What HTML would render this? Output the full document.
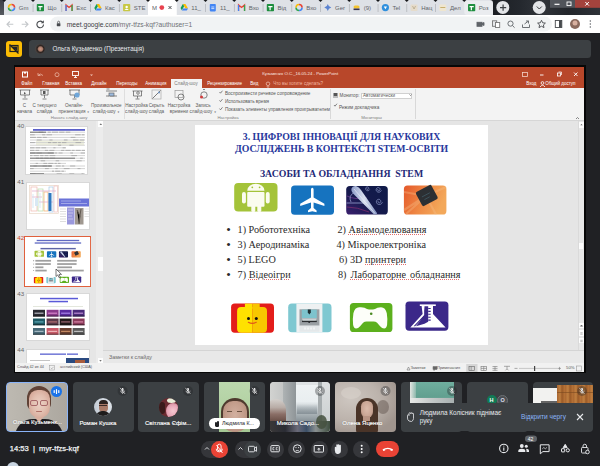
<!DOCTYPE html>
<html><head><meta charset="utf-8">
<style>
*{margin:0;padding:0;box-sizing:border-box}
html,body{width:600px;height:466px;overflow:hidden;background:#202124;font-family:"Liberation Sans",sans-serif}
.a{position:absolute}
.t{position:absolute;white-space:nowrap;line-height:1}
/* chrome */
#tabstrip{left:0;top:0;width:600px;height:15px;background:#dee1e6}
.tab{position:absolute;top:0;width:29px;height:15px}
.tab .fav{position:absolute;left:5px;top:4px;width:7px;height:7px}
.tab .tt{position:absolute;left:16px;top:4px;font-size:6.5px;color:#5f6368;line-height:1}
.tab .sep{position:absolute;left:0;top:4px;width:1px;height:8px;background:#a9acb1}
.notch{position:absolute;top:0;width:4px;height:2px;background:#111;border-radius:0 0 2px 2px}
#toolbar{left:0;top:15px;width:600px;height:18px;background:#fff}
/* meet */
#mhead{left:0;top:33px;width:600px;height:31px;background:#202124}
/* ppt */
#ppt{left:14px;top:65px;width:571.8px;height:308.2px;background:#070707}
#pin{left:1.3px;top:1.7px;width:568.8px;height:305.1px;background:#e6e6e6;overflow:hidden}
.li{font-family:'Liberation Serif',serif;font-size:10.2px;color:#2a2a2a}
.sp{text-decoration:underline dotted #e07070;text-decoration-thickness:0.8px;text-underline-offset:1.2px}
</style></head><body>

<!-- ============ CHROME TAB STRIP ============ -->
<div id="tabstrip" class="a">
  <div class="a" style="left:0;top:0;width:4px;height:15px;background:linear-gradient(180deg,#3d4046,#55595f)"></div>
  <div class="a" style="left:493px;top:0;width:107px;height:15px;background:linear-gradient(90deg,#1c1f24,#24282e 25%,#30343a 45%,#23262b 70%,#2e3238)"></div>
<svg class="a" style="left:0;top:0" width="600" height="15">
<g transform="translate(11.55 7.5)" fill="none" stroke-width="1.6"><path d="M3 0 A3 3 0 0 1 0 3" stroke="#4285f4"/><path d="M0 3 A3 3 0 0 1 -3 0" stroke="#34a853"/><path d="M-3 0 A3 3 0 0 1 0 -3" stroke="#fbbc05"/><path d="M0 -3 A3 3 0 0 1 3 0" stroke="#ea4335"/></g><path d="M2.25 0 h4 l-2 2z" fill="#16181b"/>
<rect x="36.8" y="4" width="7.2" height="7.2" rx="0.8" fill="#1e8e3e"/><path d="M38.3 6.6 h4.2 M40.099999999999994 6.6 v3.6" stroke="#fff" stroke-width="1.2"/><rect x="32.7" y="4" width="0.7" height="8" fill="#aeb1b6"/><path d="M31.0 0 h4 l-2 2z" fill="#16181b"/>
<path d="M66.05 11 v-6 l3 2.5 l3 -2.5 v6" fill="none" stroke="#ea4335" stroke-width="1.3"/><path d="M66.05 11 v-6" stroke="#4285f4" stroke-width="1.3"/><path d="M72.05 11 v-6" stroke="#34a853" stroke-width="1.3"/><rect x="61.45" y="4" width="0.7" height="8" fill="#aeb1b6"/><path d="M59.75 0 h4 l-2 2z" fill="#16181b"/>
<path d="M96.6 4 h2.6 l2.6 4.6 h-2.6z" fill="#fbbc04"/><path d="M96.6 4 l1.3 2.3 l-2.3 4 l-1.3 -2.3z" fill="#0f9d58"/><path d="M95.6 10.6 l1.3 -2.2 h4.9 l-1.3 2.2z" fill="#4285f4"/><rect x="90.2" y="4" width="0.7" height="8" fill="#aeb1b6"/><path d="M88.5 0 h4 l-2 2z" fill="#16181b"/>
<rect x="123.05" y="4" width="7.2" height="7.2" rx="0.8" fill="#c8c845"/><circle cx="126.64999999999999" cy="7" r="1.2" fill="#fff"/><path d="M124.55 10 q2.1 -2.5 4.2 0" fill="#fff"/><rect x="118.95" y="4" width="0.7" height="8" fill="#aeb1b6"/><path d="M117.25 0 h4 l-2 2z" fill="#16181b"/>
<rect x="148.0" y="0" width="28.75" height="15" fill="#fff"/><path d="M145.0 0 q3 0 3 3 v-3z M179.75 0 q-3 0 -3 3 v-3z" fill="#fff"/><path d="M146.0 0 h4 l-2 2z" fill="#16181b"/>
<circle cx="161.8" cy="7.6" r="2.4" fill="#e8424f"/><path d="M168.5 6 l3 3 M171.5 6 l-3 3" stroke="#3c4043" stroke-width="0.9"/><path d="M182.85000000000002 4 h2.6 l2.6 4.6 h-2.6z" fill="#fbbc04"/><path d="M182.85000000000002 4 l1.3 2.3 l-2.3 4 l-1.3 -2.3z" fill="#0f9d58"/><path d="M181.85000000000002 10.6 l1.3 -2.2 h4.9 l-1.3 2.2z" fill="#4285f4"/><path d="M174.75 0 h4 l-2 2z" fill="#16181b"/>
<rect x="209.8" y="4" width="6" height="7.4" rx="0.8" fill="#4285f4"/><path d="M211.3 7 h3 M211.3 8.6 h3" stroke="#fff" stroke-width="0.7"/><rect x="205.2" y="4" width="0.7" height="8" fill="#aeb1b6"/><path d="M203.5 0 h4 l-2 2z" fill="#16181b"/>
<path d="M238.55 11 v-6 l3 2.5 l3 -2.5 v6" fill="none" stroke="#ea4335" stroke-width="1.3"/><path d="M238.55 11 v-6" stroke="#4285f4" stroke-width="1.3"/><path d="M244.55 11 v-6" stroke="#34a853" stroke-width="1.3"/><rect x="233.95" y="4" width="0.7" height="8" fill="#aeb1b6"/><path d="M232.25 0 h4 l-2 2z" fill="#16181b"/>
<rect x="266.8" y="4" width="7.2" height="7.2" rx="0.8" fill="#1e8e3e"/><path d="M268.3 6.6 h4.2 M270.1 6.6 v3.6" stroke="#fff" stroke-width="1.2"/><rect x="262.7" y="4" width="0.7" height="8" fill="#aeb1b6"/><path d="M261.0 0 h4 l-2 2z" fill="#16181b"/>
<g transform="translate(299.05 7.5)" fill="none" stroke-width="1.6"><path d="M3 0 A3 3 0 0 1 0 3" stroke="#4285f4"/><path d="M0 3 A3 3 0 0 1 -3 0" stroke="#34a853"/><path d="M-3 0 A3 3 0 0 1 0 -3" stroke="#fbbc05"/><path d="M0 -3 A3 3 0 0 1 3 0" stroke="#ea4335"/></g><rect x="291.45" y="4" width="0.7" height="8" fill="#aeb1b6"/><path d="M289.75 0 h4 l-2 2z" fill="#16181b"/>
<path d="M327.8 4 q0.6 2.9 3.5 3.5 q-2.9 0.6 -3.5 3.5 q-0.6 -2.9 -3.5 -3.5 q2.9 -0.6 3.5 -3.5z" fill="#5b83d0"/><rect x="320.2" y="4" width="0.7" height="8" fill="#aeb1b6"/><path d="M318.5 0 h4 l-2 2z" fill="#16181b"/>
<rect x="353.55" y="5.5" width="6" height="3" rx="1.5" fill="#f4c430"/><rect x="353.55" y="8.5" width="6" height="1.6" fill="#3a3550"/><rect x="348.95" y="4" width="0.7" height="8" fill="#aeb1b6"/><path d="M347.25 0 h4 l-2 2z" fill="#16181b"/>
<circle cx="385.40000000000003" cy="7.6" r="3.6" fill="#2f8fdd"/><path d="M383.8 6.5 h3.2 l-1.6 2.8z" fill="#fff"/><rect x="377.7" y="4" width="0.7" height="8" fill="#aeb1b6"/><path d="M376.0 0 h4 l-2 2z" fill="#16181b"/>
<rect x="410.55" y="4.5" width="7" height="6.5" rx="1" fill="#e6dccb"/><path d="M412.55 6 l1.5 3 l1.5 -3" stroke="#b8a888" stroke-width="0.8" fill="none"/><rect x="406.45" y="4" width="0.7" height="8" fill="#aeb1b6"/><path d="M404.75 0 h4 l-2 2z" fill="#16181b"/>
<rect x="439.3" y="4.5" width="7" height="6.5" rx="1" fill="#efe6cf"/><path d="M440.3 7.5 h5" stroke="#c8b070" stroke-width="1"/><rect x="435.2" y="4" width="0.7" height="8" fill="#aeb1b6"/><path d="M433.5 0 h4 l-2 2z" fill="#16181b"/>
<rect x="464.25" y="0.8" width="28.75" height="14.2" rx="3" fill="#eaecef"/><rect x="468.05" y="4" width="7.2" height="7.2" rx="0.8" fill="#1e8e3e"/><path d="M469.55 6.6 h4.2 M471.35 6.6 v3.6" stroke="#fff" stroke-width="1.2"/><path d="M462.25 0 h4 l-2 2z" fill="#16181b"/>
<path d="M493 0 h-3 q3 0 3 3z" fill="#16181b"/><circle cx="502.8" cy="7.4" r="6.5" fill="#e3e5e8"/><path d="M503.1 4.5 v6.2 M500 7.6 h6.2" stroke="#3c4043" stroke-width="1.2"/><circle cx="539.2" cy="7.5" r="6.5" fill="#e3e5e8"/><path d="M536.8 6.5 l2.5 2.5 l2.5 -2.5" fill="none" stroke="#3c4043" stroke-width="1"/><rect x="550" y="0" width="25" height="7.8" fill="#6e7278" opacity="0.6"/><rect x="575" y="0" width="25" height="7.8" fill="#b8463e" opacity="0.85"/><path d="M554.5 4.3 h5" stroke="#fff" stroke-width="1.2"/><rect x="567" y="2" width="4" height="3.6" fill="none" stroke="#fff" stroke-width="0.9"/><path d="M585.3 2 l3.6 3.6 M588.9 2 l-3.6 3.6" stroke="#fff" stroke-width="1"/></svg>
<div class="t" style="left:18.75px;top:4.6px;font-size:6px;color:#5f6368">Gm</div><div class="t" style="left:47.5px;top:4.6px;font-size:6px;color:#5f6368">Що</div><div class="t" style="left:76.25px;top:4.6px;font-size:6px;color:#5f6368">Exc</div><div class="t" style="left:105.0px;top:4.6px;font-size:6px;color:#5f6368">Кас</div><div class="t" style="left:133.75px;top:4.6px;font-size:6px;color:#5f6368">STE</div><div class="t" style="left:152.0px;top:4.6px;font-size:6px;color:#5f6368">M</div><div class="t" style="left:191.25px;top:4.6px;font-size:6px;color:#5f6368">11_</div><div class="t" style="left:220.0px;top:4.6px;font-size:6px;color:#5f6368">11_</div><div class="t" style="left:248.75px;top:4.6px;font-size:6px;color:#5f6368">Вхо</div><div class="t" style="left:277.5px;top:4.6px;font-size:6px;color:#5f6368">Від</div><div class="t" style="left:306.25px;top:4.6px;font-size:6px;color:#5f6368">Вхо</div><div class="t" style="left:335.0px;top:4.6px;font-size:6px;color:#5f6368">Ger</div><div class="t" style="left:363.75px;top:4.6px;font-size:6px;color:#5f6368">(9)</div><div class="t" style="left:392.5px;top:4.6px;font-size:6px;color:#5f6368">Tel</div><div class="t" style="left:421.25px;top:4.6px;font-size:6px;color:#5f6368">Нац</div><div class="t" style="left:450.0px;top:4.6px;font-size:6px;color:#5f6368">Дел</div><div class="t" style="left:478.75px;top:4.6px;font-size:6px;color:#5f6368">Роз</div>
</div>

<!-- ============ TOOLBAR ============ -->
<div id="toolbar" class="a">
  <svg class="a" style="left:0;top:0" width="600" height="18">
    <g fill="none" stroke-width="1.1">
      <path d="M13.3 9.3 h-6.3 M9.8 6.5 l-2.8 2.8 l2.8 2.8" stroke="#c4c7ca"/>
      <path d="M21.7 9.3 h6.3 M25.2 6.5 l2.8 2.8 l-2.8 2.8" stroke="#c4c7ca"/>
      <path d="M43.5 9.5 a3.3 3.3 0 1 1 -1 -2.4" stroke="#474a4e"/>
    </g>
    <path d="M43.8 5.2 v3 h-3z" fill="#474a4e"/>
    <rect x="50" y="1.5" width="502" height="15" rx="7.5" fill="#f1f3f4"/>
    <rect x="56.8" y="8.2" width="3.6" height="3" rx="0.4" fill="#474a4e"/>
    <path d="M57.6 8.2 v-1 a1 1 0 0 1 2 0 v1" fill="none" stroke="#474a4e" stroke-width="0.7"/>
    <g fill="none" stroke="#5f6368" stroke-width="0.9">
      <rect x="477" y="7.3" width="5" height="4" fill="#5f6368"/><path d="M482 8.5 l2 -1 v3 l-2 -1z" fill="#5f6368"/>
      <rect x="492.5" y="5.8" width="4.2" height="5.5" fill="#e8eaed" stroke="#777"/><rect x="495.5" y="7.5" width="4.2" height="5" fill="#fff" stroke="#777"/>
      <circle cx="510.5" cy="8.6" r="2.6"/><path d="M512.4 10.5 l2.2 2.2"/>
      <path d="M522.5 9.5 v3 h7 v-3 M524.5 9 l4 -3 M526 6 h2.5 v2.5"/>
      <path d="M541.5 5.3 l1.2 2.5 l2.7 0.3 l-2 1.8 l0.6 2.7 l-2.5 -1.4 l-2.5 1.4 l0.6 -2.7 l-2 -1.8 l2.7 -0.3z" stroke="#474a4e"/>
      <rect x="555.3" y="5.5" width="6.5" height="7" stroke="#474a4e"/>
    </g>
    <rect x="559" y="5.5" width="2.8" height="7" fill="#474a4e"/>
    <circle cx="575" cy="9" r="5" fill="#8a6a5e"/>
    <circle cx="575" cy="8" r="2.5" fill="#d8b0a0"/>
    <g fill="#5f6368"><circle cx="590.3" cy="6" r="0.75"/><circle cx="590.3" cy="9" r="0.75"/><circle cx="590.3" cy="12" r="0.75"/></g>
  </svg>
  <div class="t" style="left:66.7px;top:6.5px;font-size:6.7px;color:#3c4043">meet.google.com<span style="color:#6d7175">/myr-tfzs-kqf?authuser=1</span></div>
</div>

<!-- ============ MEET HEADER ============ -->
<div id="mhead" class="a">
  <div class="a" style="left:6px;top:7.5px;width:16px;height:16px;background:#fbbc04;border-radius:3px"></div>
  <div class="a" style="left:29px;top:7px;width:562px;height:17.5px;background:#3c4043;border-radius:3.5px"></div>
  <div class="a" style="left:35px;top:11px;width:10px;height:10px;border-radius:50%;background:radial-gradient(circle at 55% 50%,#c89a88 0,#a87a68 28%,#2a2220 45%,#4a4442 70%)"></div>
  <svg class="a" style="left:6px;top:7.5px" width="16" height="16"><rect x="4" y="4.5" width="8" height="6" fill="none" stroke="#202124" stroke-width="1.2"/><path d="M3.5 3.5 l9 9" stroke="#202124" stroke-width="1.2"/><path d="M5 5.5 l6 4.5 v-4.5z" fill="#202124"/></svg>
  <div class="t" style="left:52.5px;top:13px;font-size:6.3px;color:#e8eaed">Ольга Кузьменко (Презентація)</div>
</div>

<!-- ============ POWERPOINT ============ -->
<div id="ppt" class="a">
  <div id="pin" class="a">
    <!-- title bar -->
    <div class="a" style="left:0;top:0;width:569px;height:21.2px;background:#b8472a"></div>
    <svg class="a" style="left:0;top:0" width="569" height="21">
      <rect x="7.5" y="5" width="5" height="5" fill="none" stroke="#fff" stroke-width="1"/>
      <rect x="9" y="5" width="2" height="1.6" fill="#fff"/>
      <path d="M23 8.5 q2 -3 5 0" fill="none" stroke="#e3a793" stroke-width="0.9"/>
      <path d="M23 6 v2.5 h2.5" fill="none" stroke="#e3a793" stroke-width="0.9"/>
      <circle cx="42" cy="7.7" r="2" fill="none" stroke="#e3a793" stroke-width="0.9"/>
      <rect x="57.5" y="4.5" width="6" height="4" fill="none" stroke="#fff" stroke-width="0.9"/>
      <path d="M60.5 8.5 v2 M59 10.5 h3" stroke="#fff" stroke-width="0.9"/>
      <path d="M75 7.5 l1.5 1.5 l1.5 -1.5z" fill="#f3c9bb"/>
      <!-- right controls -->
      <rect x="507.5" y="5.5" width="5" height="4" fill="none" stroke="#f3d2c7" stroke-width="0.8"/>
      <path d="M525 8 h3.5" stroke="#fff" stroke-width="0.9"/>
      <rect x="542.5" y="6" width="3" height="3" fill="none" stroke="#fff" stroke-width="0.8"/>
      <path d="M543.5 5 h3 v3" fill="none" stroke="#fff" stroke-width="0.7"/>
      <path d="M559 5.5 l3.5 3.5 M562.5 5.5 l-3.5 3.5" stroke="#fff" stroke-width="0.9"/>
      <circle cx="527.5" cy="16" r="1.4" fill="none" stroke="#fff" stroke-width="0.8"/>
      <path d="M525 20 q2.5 -3.5 5 0" fill="none" stroke="#fff" stroke-width="0.8"/>
    </svg>
    <div class="t" style="left:247px;top:5px;font-size:4.3px;color:#fbe9e3">Кузьменко О.С._16.05.24 - PowerPoint</div>
    <!-- tabs -->
    <div class="a" style="left:156.2px;top:12.05px;width:30.7px;height:9.2px;background:#f3f3f3"></div>
    <div class="t" style="left:6px;top:15.6px;font-size:4.5px;color:#fff">Файл</div>
    <div class="t" style="left:27px;top:15.6px;font-size:4.5px;color:#fff">Главная</div>
    <div class="t" style="left:50px;top:15.6px;font-size:4.5px;color:#fff">Вставка</div>
    <div class="t" style="left:76px;top:15.6px;font-size:4.5px;color:#fff">Дизайн</div>
    <div class="t" style="left:101px;top:15.6px;font-size:4.5px;color:#fff">Переходы</div>
    <div class="t" style="left:130px;top:15.6px;font-size:4.5px;color:#fff">Анимация</div>
    <div class="t" style="left:159px;top:15.6px;font-size:4.5px;color:#777">Слайд-шоу</div>
    <div class="t" style="left:192px;top:15.6px;font-size:4.5px;color:#fff">Рецензирование</div>
    <div class="t" style="left:235px;top:15.6px;font-size:4.5px;color:#fff">Вид</div>
    <svg class="a" style="left:250px;top:14px" width="6" height="7"><circle cx="3" cy="2.8" r="1.8" fill="none" stroke="#f3c9bb" stroke-width="0.7"/><path d="M2.2 5 v1.2 h1.6 v-1.2" fill="none" stroke="#f3c9bb" stroke-width="0.6"/></svg>
    <div class="t" style="left:258px;top:15.6px;font-size:4.5px;color:#f3b9a4">Что вы хотите сделать?</div>
    <div class="t" style="left:511px;top:15.6px;font-size:4.5px;color:#fff">Вход</div>
    <div class="t" style="left:530px;top:15.6px;font-size:4.5px;color:#fff">Общий доступ</div>

<div class="a" style="left:-0.3px;top:-0.7px;width:570px;height:306px">
    <!-- ribbon -->
    <div class="a" style="left:0;top:21.9px;width:570px;height:32.8px;background:#f3f3f3;border-bottom:1px solid #d6d6d6"></div>
<div class="t" style="left:-20.5px;width:60px;text-align:center;top:38px;font-size:4.6px;color:#5a5a5a">С</div>
<div class="t" style="left:-20.5px;width:60px;text-align:center;top:44.4px;font-size:4.6px;color:#5a5a5a">начала</div>
<div class="t" style="left:-0.5px;width:60px;text-align:center;top:38px;font-size:4.6px;color:#5a5a5a">С текущего</div>
<div class="t" style="left:-0.5px;width:60px;text-align:center;top:44.4px;font-size:4.6px;color:#5a5a5a">слайда</div>
<div class="t" style="left:29px;width:60px;text-align:center;top:38px;font-size:4.6px;color:#5a5a5a">Онлайн-</div>
<div class="t" style="left:29px;width:60px;text-align:center;top:44.4px;font-size:4.6px;color:#5a5a5a">презентация <span style="font-size:2.8px;vertical-align:0.5px">▼</span></div>
<div class="t" style="left:61.3px;width:60px;text-align:center;top:38px;font-size:4.6px;color:#5a5a5a">Произвольное</div>
<div class="t" style="left:61.3px;width:60px;text-align:center;top:44.4px;font-size:4.6px;color:#5a5a5a">слайд-шоу <span style="font-size:2.8px;vertical-align:0.5px">▼</span></div>
<div class="t" style="left:91.5px;width:60px;text-align:center;top:38px;font-size:4.6px;color:#5a5a5a">Настройка</div>
<div class="t" style="left:91.5px;width:60px;text-align:center;top:44.4px;font-size:4.6px;color:#5a5a5a">слайд-шоу</div>
<div class="t" style="left:111.5px;width:60px;text-align:center;top:38px;font-size:4.6px;color:#5a5a5a">Скрыть</div>
<div class="t" style="left:111.5px;width:60px;text-align:center;top:44.4px;font-size:4.6px;color:#5a5a5a">слайда</div>
<div class="t" style="left:134px;width:60px;text-align:center;top:38px;font-size:4.6px;color:#5a5a5a">Настройка</div>
<div class="t" style="left:134px;width:60px;text-align:center;top:44.4px;font-size:4.6px;color:#5a5a5a">времени</div>
<div class="t" style="left:158px;width:60px;text-align:center;top:38px;font-size:4.6px;color:#5a5a5a">Запись</div>
<div class="t" style="left:158px;width:60px;text-align:center;top:44.4px;font-size:4.6px;color:#5a5a5a">слайд-шоу <span style="font-size:2.8px;vertical-align:0.5px">▼</span></div>
<div class="t" style="left:24px;width:60px;text-align:center;top:50.2px;font-size:4.3px;color:#808080">Начать слайд-шоу</div>
<div class="t" style="left:183px;width:60px;text-align:center;top:50.2px;font-size:4.3px;color:#808080">Настройка</div>
<div class="t" style="left:326.5px;width:60px;text-align:center;top:50.2px;font-size:4.3px;color:#808080">Мониторы</div>
<div class="t" style="left:210px;top:25.7px;font-size:4.6px;color:#555">Воспроизвести речевое сопровождение</div>
<div class="t" style="left:210px;top:34.1px;font-size:4.6px;color:#555">Использовать время</div>
<div class="t" style="left:210px;top:42.3px;font-size:4.6px;color:#555">Показать элементы управления проигрывателем</div>
<div class="t" style="left:324.5px;top:27.5px;font-size:4.6px;color:#555">Монитор:</div>
<div class="a" style="left:345.8px;top:26.7px;width:51.7px;height:6.6px;background:#fff;border:0.5px solid #d0d0d0"></div>
<div class="t" style="left:348px;top:28.3px;font-size:4.6px;color:#555">Автоматически</div>
<div class="t" style="left:324px;top:39.7px;font-size:4.6px;color:#555">Режим докладчика</div>
<div class="a" style="left:109px;top:23px;width:0.6px;height:30px;background:#dedede"></div>
<div class="a" style="left:315px;top:23px;width:0.6px;height:30px;background:#d8d8d8"></div>
<div class="a" style="left:399.5px;top:23px;width:0.6px;height:30px;background:#d8d8d8"></div>
<svg class="a" style="left:0;top:21px" width="569" height="34">
<g stroke="#555" stroke-width="0.7" fill="none">
 <!-- btn1 projector -->
 <path d="M4.5 3 h11 M5.5 3 v5 h9 v-5"/><path d="M10 8 v3 M7.5 12 h5"/>
 <path d="M9 5 l2 1.2 l-2 1.2z" fill="#555" stroke="none"/>
 <!-- btn2 -->
 <path d="M25 3 h9 M26 3 v5 h7 v-5"/><path d="M29.5 8 v3 M27.5 12 h4"/>
 <rect x="28" y="4" width="2.5" height="3" fill="#555" stroke="none"/>
 <!-- btn3 online -->
 <path d="M54 3 h11 M55 3 v5 h9 v-5"/><path d="M59.5 8 v3 M57.5 12 h4"/>
 <circle cx="62" cy="8" r="2.6" fill="#6fa6d8" stroke="none"/>
 <!-- btn4 custom -->
 <path d="M91.5 2 h3 M91 4 h11 M91 9 h3 M95 9 h7"/>
 <rect x="94" y="6" width="5" height="3" fill="#9bbbe0" stroke="#666"/>
 <!-- btn5 setup -->
 <path d="M117.5 4 h10 M118.5 4 v5 h8 v-5"/><path d="M122.5 9 v2.5 M120.5 12 h4"/>
 <circle cx="123" cy="6" r="1.3"/>
 <!-- btn6 hide -->
 <rect x="137" y="3" width="9" height="9" stroke="#aaa"/><path d="M137.5 11.5 l8 -8" stroke="#444"/><circle cx="144" cy="5.5" r="1" fill="#6a8fc0" stroke="none"/>
 <!-- btn7 timings -->
 <rect x="160" y="3.5" width="8" height="7" stroke="#999"/><circle cx="166" cy="10" r="3"/>
 <!-- btn8 record -->
 <circle cx="189" cy="8" r="3.2"/><circle cx="186.5" cy="10" r="1.5" fill="#d23c3c" stroke="none"/><path d="M188 2.5 h2"/>
 <!-- checks -->
 <path d="M204.5 5 l1 1.2 l2 -2.5 M204.5 13.4 l1 1.2 l2 -2.5 M204.5 21.6 l1 1.2 l2 -2.5 M319 18 l1 1.2 l2 -2.5"/>
 <!-- monitor icon -->
 <rect x="318.5" y="6" width="4" height="3" fill="#555" stroke="none"/><path d="M318 10 h5"/>
 <path d="M394.5 7.5 l1 1 l1 -1" />
 <path d="M561 32 l1.5 -1.5 l1.5 1.5"/>
</g></svg>
    <!-- left panel -->
    <div class="a" style="left:0;top:54.5px;width:81px;height:242.5px;background:#e6e6e6"></div>
    <div class="a" style="left:81px;top:54.5px;width:7px;height:242.5px;background:#ececec"></div>
    <div class="a" style="left:82.5px;top:55px;width:5.5px;height:6px;background:#fdfdfd"></div>
    <div class="a" style="left:83px;top:191px;width:5px;height:14px;background:#fdfdfd"></div>
    <div class="a" style="left:82.5px;top:291.5px;width:5px;height:5px;background:#fdfdfd"></div>
<div class="t" style="left:2.2px;top:56.9px;font-size:6.2px;color:#666">40</div>
<div class="t" style="left:2.2px;top:112.9px;font-size:6.2px;color:#666">41</div>
<div class="t" style="left:2.2px;top:168.9px;font-size:6.2px;color:#d04a2c">42</div>
<div class="t" style="left:2.2px;top:224.9px;font-size:6.2px;color:#666">43</div>
<div class="t" style="left:2.2px;top:280.9px;font-size:6.2px;color:#666">44</div>
<div class="a" style="left:10px;top:59.5px;width:63px;height:49.5px;background:#fff;border:0.5px solid #d8d8d8;overflow:hidden">
<svg width="63" height="49" style="position:absolute;left:0;top:0">
<rect x="7" y="2" width="52" height="1.8" fill="#5a5fc8"/>
<rect x="10" y="13.5" width="48" height="5" fill="#eef0dc" opacity="0.9"/>
<path d="M4 5.2 h55" stroke="#cfcfcf" stroke-width="0.9"/><path d="M12.8 5.2 h4.5" stroke="#aaaaaa" stroke-width="0.9"/><path d="M21.8 5.2 h3.0" stroke="#aaaaaa" stroke-width="0.9"/><path d="M26.0 5.2 h6.0" stroke="#aaaaaa" stroke-width="0.9"/><path d="M33.2 5.2 h5.3" stroke="#aaaaaa" stroke-width="0.9"/><path d="M39.8 5.2 h4.6" stroke="#aaaaaa" stroke-width="0.9"/><path d="M4 5.2 h16" stroke="#707070" stroke-width="1"/><path d="M4 7.8 h55" stroke="#cfcfcf" stroke-width="0.9"/><path d="M4.0 7.8 h4.7" stroke="#aaaaaa" stroke-width="0.9"/><path d="M16.1 7.8 h3.2" stroke="#aaaaaa" stroke-width="0.9"/><path d="M20.5 7.8 h5.5" stroke="#aaaaaa" stroke-width="0.9"/><path d="M49.1 7.8 h5.5" stroke="#aaaaaa" stroke-width="0.9"/><path d="M55.8 7.8 h2.5" stroke="#aaaaaa" stroke-width="0.9"/><path d="M4 10.4 h55" stroke="#cfcfcf" stroke-width="0.9"/><path d="M4.0 10.4 h5.9" stroke="#aaaaaa" stroke-width="0.9"/><path d="M11.1 10.4 h4.5" stroke="#aaaaaa" stroke-width="0.9"/><path d="M16.8 10.4 h4.0" stroke="#aaaaaa" stroke-width="0.9"/><path d="M44.7 10.4 h4.7" stroke="#aaaaaa" stroke-width="0.9"/><path d="M4 13.0 h55" stroke="#cfcfcf" stroke-width="0.9"/><path d="M10.8 13.0 h4.9" stroke="#aaaaaa" stroke-width="0.9"/><path d="M23.4 13.0 h3.1" stroke="#aaaaaa" stroke-width="0.9"/><path d="M37.9 13.0 h3.6" stroke="#aaaaaa" stroke-width="0.9"/><path d="M47.1 13.0 h5.5" stroke="#aaaaaa" stroke-width="0.9"/><path d="M53.8 13.0 h4.5" stroke="#aaaaaa" stroke-width="0.9"/><path d="M4 15.6 h55" stroke="#cfcfcf" stroke-width="0.9"/><path d="M4.0 15.6 h4.9" stroke="#aaaaaa" stroke-width="0.9"/><path d="M22.0 15.6 h3.2" stroke="#aaaaaa" stroke-width="0.9"/><path d="M26.5 15.6 h4.4" stroke="#aaaaaa" stroke-width="0.9"/><path d="M32.1 15.6 h2.8" stroke="#aaaaaa" stroke-width="0.9"/><path d="M36.0 15.6 h4.4" stroke="#aaaaaa" stroke-width="0.9"/><path d="M49.5 15.6 h5.6" stroke="#aaaaaa" stroke-width="0.9"/><path d="M4 18.2 h55" stroke="#cfcfcf" stroke-width="0.9"/><path d="M32.1 18.2 h3.0" stroke="#aaaaaa" stroke-width="0.9"/><path d="M43.4 18.2 h4.2" stroke="#aaaaaa" stroke-width="0.9"/><path d="M4 20.8 h36" stroke="#cfcfcf" stroke-width="0.9"/><path d="M4.0 20.8 h4.5" stroke="#aaaaaa" stroke-width="0.9"/><path d="M9.7 20.8 h4.5" stroke="#aaaaaa" stroke-width="0.9"/><path d="M15.4 20.8 h4.7" stroke="#aaaaaa" stroke-width="0.9"/><path d="M27.4 20.8 h2.1" stroke="#aaaaaa" stroke-width="0.9"/><path d="M36.6 20.8 h3.0" stroke="#aaaaaa" stroke-width="0.9"/><path d="M4 23.4 h55" stroke="#cfcfcf" stroke-width="0.9"/><path d="M4.0 23.4 h4.4" stroke="#aaaaaa" stroke-width="0.9"/><path d="M9.6 23.4 h3.5" stroke="#aaaaaa" stroke-width="0.9"/><path d="M18.9 23.4 h3.2" stroke="#aaaaaa" stroke-width="0.9"/><path d="M23.3 23.4 h5.1" stroke="#aaaaaa" stroke-width="0.9"/><path d="M35.1 23.4 h3.2" stroke="#aaaaaa" stroke-width="0.9"/><path d="M39.5 23.4 h5.2" stroke="#aaaaaa" stroke-width="0.9"/><path d="M45.9 23.4 h2.7" stroke="#aaaaaa" stroke-width="0.9"/><path d="M49.9 23.4 h4.8" stroke="#aaaaaa" stroke-width="0.9"/><path d="M55.9 23.4 h3.1" stroke="#aaaaaa" stroke-width="0.9"/><path d="M4 26.0 h55" stroke="#cfcfcf" stroke-width="0.9"/><path d="M4.0 26.0 h5.3" stroke="#aaaaaa" stroke-width="0.9"/><path d="M10.5 26.0 h5.4" stroke="#aaaaaa" stroke-width="0.9"/><path d="M21.7 26.0 h5.5" stroke="#aaaaaa" stroke-width="0.9"/><path d="M28.4 26.0 h2.9" stroke="#aaaaaa" stroke-width="0.9"/><path d="M32.5 26.0 h4.1" stroke="#aaaaaa" stroke-width="0.9"/><path d="M44.3 26.0 h2.7" stroke="#aaaaaa" stroke-width="0.9"/><path d="M54.7 26.0 h4.3" stroke="#aaaaaa" stroke-width="0.9"/><path d="M4 26.0 h24" stroke="#707070" stroke-width="1"/><path d="M4 28.6 h55" stroke="#cfcfcf" stroke-width="0.9"/><path d="M4.0 28.6 h2.5" stroke="#aaaaaa" stroke-width="0.9"/><path d="M7.7 28.6 h5.2" stroke="#aaaaaa" stroke-width="0.9"/><path d="M14.1 28.6 h3.4" stroke="#aaaaaa" stroke-width="0.9"/><path d="M18.7 28.6 h3.7" stroke="#aaaaaa" stroke-width="0.9"/><path d="M23.6 28.6 h5.7" stroke="#aaaaaa" stroke-width="0.9"/><path d="M45.3 28.6 h5.7" stroke="#aaaaaa" stroke-width="0.9"/><path d="M4 31.2 h55" stroke="#cfcfcf" stroke-width="0.9"/><path d="M9.9 31.2 h3.2" stroke="#aaaaaa" stroke-width="0.9"/><path d="M14.2 31.2 h2.9" stroke="#aaaaaa" stroke-width="0.9"/><path d="M18.3 31.2 h4.4" stroke="#aaaaaa" stroke-width="0.9"/><path d="M23.9 31.2 h5.2" stroke="#aaaaaa" stroke-width="0.9"/><path d="M54.1 31.2 h2.7" stroke="#aaaaaa" stroke-width="0.9"/><path d="M4 31.2 h45" stroke="#707070" stroke-width="1"/><path d="M4 33.8 h55" stroke="#cfcfcf" stroke-width="0.9"/><path d="M14.7 33.8 h4.4" stroke="#aaaaaa" stroke-width="0.9"/><path d="M29.7 33.8 h3.4" stroke="#aaaaaa" stroke-width="0.9"/><path d="M50.4 33.8 h5.3" stroke="#aaaaaa" stroke-width="0.9"/><path d="M4 36.4 h36" stroke="#cfcfcf" stroke-width="0.9"/><path d="M9.7 36.4 h2.2" stroke="#aaaaaa" stroke-width="0.9"/><path d="M17.4 36.4 h3.7" stroke="#aaaaaa" stroke-width="0.9"/><path d="M22.3 36.4 h5.1" stroke="#aaaaaa" stroke-width="0.9"/><path d="M28.6 36.4 h2.2" stroke="#aaaaaa" stroke-width="0.9"/><path d="M32.0 36.4 h2.5" stroke="#aaaaaa" stroke-width="0.9"/><path d="M4 39.0 h55" stroke="#cfcfcf" stroke-width="0.9"/><path d="M7.5 39.0 h3.3" stroke="#aaaaaa" stroke-width="0.9"/><path d="M16.6 39.0 h4.3" stroke="#aaaaaa" stroke-width="0.9"/><path d="M22.2 39.0 h2.8" stroke="#aaaaaa" stroke-width="0.9"/><path d="M29.8 39.0 h4.9" stroke="#aaaaaa" stroke-width="0.9"/><path d="M35.9 39.0 h2.3" stroke="#aaaaaa" stroke-width="0.9"/><path d="M44.1 39.0 h5.1" stroke="#aaaaaa" stroke-width="0.9"/><path d="M4 39.0 h22" stroke="#707070" stroke-width="1"/><path d="M4 41.6 h55" stroke="#cfcfcf" stroke-width="0.9"/><path d="M4.0 41.6 h3.7" stroke="#aaaaaa" stroke-width="0.9"/><path d="M19.0 41.6 h3.8" stroke="#aaaaaa" stroke-width="0.9"/><path d="M29.4 41.6 h2.3" stroke="#aaaaaa" stroke-width="0.9"/><path d="M37.8 41.6 h5.7" stroke="#aaaaaa" stroke-width="0.9"/><path d="M51.5 41.6 h3.0" stroke="#aaaaaa" stroke-width="0.9"/><path d="M4 44.2 h36" stroke="#cfcfcf" stroke-width="0.9"/><path d="M26.0 44.2 h2.0" stroke="#aaaaaa" stroke-width="0.9"/><path d="M29.2 44.2 h5.1" stroke="#aaaaaa" stroke-width="0.9"/><path d="M35.5 44.2 h2.4" stroke="#aaaaaa" stroke-width="0.9"/><path d="M4 46.8 h55" stroke="#cfcfcf" stroke-width="0.9"/><path d="M4.0 46.8 h5.5" stroke="#aaaaaa" stroke-width="0.9"/><path d="M30.6 46.8 h5.2" stroke="#aaaaaa" stroke-width="0.9"/><path d="M43.3 46.8 h4.9" stroke="#aaaaaa" stroke-width="0.9"/><path d="M55.5 46.8 h2.2" stroke="#aaaaaa" stroke-width="0.9"/><path d="M4 46.8 h14" stroke="#707070" stroke-width="1"/>
</svg></div>
<div class="a" style="left:10.5px;top:115.5px;width:64.5px;height:48px;background:#fff;border:0.5px solid #d8d8d8;overflow:hidden">
<svg width="64" height="48" style="position:absolute;left:0;top:0">
<g fill="none" stroke-width="0.7">
<rect x="2.5" y="2.5" width="29" height="28" stroke="#e8d8c8"/>
<rect x="4" y="4" width="6" height="24" stroke="#f0b8b0"/>
<rect x="11" y="6" width="5" height="22" stroke="#b8dca8"/>
<rect x="17" y="9" width="4" height="19" stroke="#f4b070"/>
<rect x="22" y="4" width="4" height="25" stroke="#a8cce8"/>
<rect x="27" y="3" width="3.5" height="26" stroke="#f0c0c0"/>
<path d="M5 8 h24 M5 14 h10 M12 19 h14" stroke="#e0a8c8"/>
<path d="M6 11 v14 M13 10 v15" stroke="#c8e0f0"/>
</g>
<rect x="21.5" y="10" width="3" height="18" fill="#2f78c0"/>
<rect x="8" y="15" width="3" height="8" fill="#d8e8f4"/>
<rect x="32" y="15.5" width="31" height="8" fill="#6a72d8"/>
<path d="M34 18 h20 M34 20.5 h26" stroke="#c8ccf4" stroke-width="0.6"/>
<g stroke="#c8c8c8" stroke-width="0.6"><path d="M33 26 h6 M33 28.5 h6 M33 31 h6 M33 33.5 h6 M33 36 h6 M33 38.5 h6"/></g>
<rect x="40" y="24.5" width="7.5" height="17" fill="#9a98dc"/>
<path d="M41 27 h5 M41 30 h5 M41 33 h4 M41 36 h5" stroke="#e0e0f4" stroke-width="0.6"/>
<rect x="48" y="25" width="8.5" height="16.5" fill="#a09890"/>
<path d="M50 27 l3 6 l-1 8 M54 26 l-2 12" stroke="#605850" stroke-width="1"/>
<g stroke="#d0d0d0" stroke-width="0.6"><path d="M57.5 26 h5 M57.5 28.5 h5 M57.5 31 h5 M57.5 33.5 h5"/></g>
</svg></div>
<div class="a" style="left:9px;top:170px;width:67.2px;height:51px;border:1.5px solid #e0603c;background:#fff"></div>
<div class="a" style="left:10.7px;top:171.8px;width:293.7px;height:220px;transform:scale(0.2179);transform-origin:0 0;overflow:hidden;background:#fff">
      <svg class="a" style="left:0;top:0" width="294" height="220">
<g fill="#3a46b4" opacity="0.8"><rect x="49" y="8.5" width="195" height="6"/><rect x="40" y="20" width="213" height="6"/></g>
<rect x="66.5" y="45.5" width="162" height="6.5" fill="#27308a" opacity="0.75"/>
<g fill="#777" opacity="0.7">
<rect x="43" y="100.5" width="72" height="8"/><rect x="143" y="100.5" width="90" height="8"/>
<rect x="43" y="115.5" width="71" height="8"/><rect x="143" y="115.5" width="89" height="8"/>
<rect x="43" y="130.5" width="37" height="8"/><rect x="143" y="130.5" width="68" height="8"/>
<rect x="43" y="145.5" width="52" height="8"/><rect x="143" y="145.5" width="122" height="8"/>
<circle cx="35" cy="104" r="2.5"/><circle cx="35" cy="119" r="2.5"/><circle cx="35" cy="134" r="2.5"/><circle cx="35" cy="149" r="2.5"/>
</g></svg>
<svg class="a" style="left:0;top:0" width="294" height="220">
 <defs>
  <linearGradient id="chipg2" x1="0" y1="0" x2="1" y2="0.3"><stop offset="0" stop-color="#e4582a"/><stop offset="0.55" stop-color="#ef8a45"/><stop offset="1" stop-color="#f3a85a"/></linearGradient>
  <linearGradient id="windg2" x1="0" y1="1" x2="1" y2="0"><stop offset="0" stop-color="#3a1f6e"/><stop offset="0.45" stop-color="#151a4c"/><stop offset="1" stop-color="#0f1a48"/></linearGradient>
  <linearGradient id="tubeg2" x1="0" y1="0" x2="1" y2="0"><stop offset="0" stop-color="#8d9cc8"/><stop offset="0.5" stop-color="#d9e0f0"/><stop offset="1" stop-color="#7f8fbf"/></linearGradient>
 </defs>
 <!-- android -->
 <rect x="39.2" y="58" width="43.3" height="28.6" rx="4" fill="#a4c339"/>
 <path d="M52.2 65.8 a8.65 7 0 0 1 17.3 0z" fill="#fbfcef"/>
 <circle cx="57.3" cy="62.3" r="0.9" fill="#a4c339"/><circle cx="64.6" cy="62.3" r="0.9" fill="#a4c339"/>
 <rect x="52.2" y="67" width="17.3" height="14.8" rx="1" fill="#fbfcef"/>
 <rect x="47" y="67.1" width="3.9" height="11.3" rx="1.9" fill="#fbfcef"/>
 <rect x="70.8" y="67.1" width="3.9" height="11.3" rx="1.9" fill="#fbfcef"/>
 <rect x="56.3" y="80" width="4" height="7" rx="1.5" fill="#fbfcef"/>
 <rect x="62.3" y="80" width="4" height="7" rx="1.5" fill="#fbfcef"/>
 <!-- airplane -->
 <rect x="96.1" y="60.5" width="42.9" height="29.3" rx="3.6" fill="#1673bf"/>
 <path d="M117.3 62.8 c1 0 1.3 1 1.3 2 v7.8 l10.8 6.2 v2.2 l-10.8 -3.6 v5.6 l3 2.6 v1.6 l-4.3 -1 l-4.3 1 v-1.6 l3 -2.6 v-5.6 l-10.8 3.6 v-2.2 l10.8 -6.2 v-7.8 c0 -1 0.3 -2 1.3 -2z" fill="#fff"/>
 <!-- wind tunnel -->
 <rect x="151.2" y="60.9" width="41.6" height="28.6" rx="3.6" fill="url(#windg2)"/>
 <path d="M152 71 q8 4 20 2" stroke="#6a3a8a" stroke-width="0.8" fill="none"/>
 <path d="M151.5 78 h18" stroke="#9aa2d0" stroke-width="0.8"/>
 <path d="M152 82 q10 0 22 5" stroke="#8a3070" stroke-width="0.7" fill="none"/>
 <path d="M156 77 q-3 -6 3 -9.5" stroke="#9aa2d0" stroke-width="0.7" fill="none"/>
 <path d="M156.5 63.5 q1 -3 4.5 -2.5 q3 1 5 4 l16 23 q0.5 1.3 -1.2 1.3 h-2 l-20 -20 q-3 -3 -2.3 -5.8z" fill="url(#tubeg2)"/>
 <path d="M159 64 l21 24.5" stroke="#f4f6fc" stroke-width="0.7" opacity="0.8"/>
 <g fill="none" stroke="#8f9ac8" stroke-width="0.75">
  <path d="M174.61 64.65 L174.24 65.08 L173.80 65.40 L173.30 65.61 L172.78 65.69 L172.27 65.65 L171.79 65.49 L171.37 65.23 L171.03 64.88 L170.79 64.48 L170.66 64.04 L170.63 63.59 L170.71 63.16 L170.88 62.77 L171.13 62.44 L171.45 62.19 L171.80 62.03 L172.17 61.95 L172.54 61.96 L172.89 62.06 L173.19 62.24 L173.43 62.47 L173.61 62.74 L173.71 63.04 L173.74 63.34 L173.69 63.63 L173.58 63.89 L173.42 64.10 L173.22 64.27 L173.00 64.37 L172.77 64.42 L172.55 64.41 L172.34 64.35 L172.17 64.24 L172.03 64.11 L171.94 63.95 L171.89 63.79 L171.89 63.63 L171.92 63.48 L171.99 63.36 L172.08 63.27"/>
  <path d="M186.37 65.39 L186.00 66.04 L185.50 66.57 L184.89 66.95 L184.22 67.16 L183.54 67.20 L182.88 67.07 L182.29 66.78 L181.80 66.36 L181.44 65.85 L181.23 65.27 L181.17 64.68 L181.25 64.10 L181.48 63.58 L181.82 63.15 L182.24 62.82 L182.72 62.61 L183.22 62.54 L183.71 62.59 L184.16 62.76 L184.54 63.03 L184.82 63.37 L185.01 63.76 L185.09 64.17 L185.06 64.58 L184.93 64.94 L184.73 65.25 L184.46 65.49 L184.15 65.65 L183.83 65.72 L183.52 65.70 L183.23 65.61 L182.99 65.45 L182.81 65.25 L182.70 65.03 L182.65 64.79 L182.66 64.56 L182.73 64.36 L182.84 64.20 L182.99 64.09 L183.14 64.02"/>
  <path d="M187.33 77.18 L187.00 77.95 L186.49 78.61 L185.85 79.11 L185.12 79.42 L184.35 79.54 L183.59 79.46 L182.89 79.21 L182.29 78.79 L181.83 78.25 L181.53 77.63 L181.39 76.97 L181.42 76.31 L181.62 75.70 L181.95 75.16 L182.39 74.75 L182.91 74.46 L183.47 74.32 L184.03 74.32 L184.55 74.46 L185.00 74.72 L185.37 75.08 L185.62 75.50 L185.75 75.95 L185.77 76.41 L185.67 76.84 L185.47 77.21 L185.19 77.51 L184.87 77.72 L184.51 77.83 L184.15 77.85 L183.82 77.78 L183.54 77.63 L183.31 77.43 L183.15 77.18 L183.07 76.92 L183.06 76.67 L183.12 76.43 L183.23 76.24 L183.37 76.09 L183.54 76.00"/>
 </g>
 <!-- chip -->
 <rect x="208.9" y="60.5" width="42.5" height="29" rx="3.6" fill="url(#chipg2)"/>
 <path d="M209 67 l22 4 M211 89 l20 -18 M231 71 l20 -9 M231 71 l10 18.5 M231 71 l-22 14" stroke="#f7c08a" stroke-width="2.2" opacity="0.35"/>
 <g transform="translate(231.8 70.5) rotate(-28)"><rect x="-8.8" y="-8" width="17.6" height="16" rx="1.8" fill="#2c2f33"/><path d="M-5 -1 h9 M-4 2.5 h6" stroke="#3e5560" stroke-width="0.8"/></g>
 <!-- lego -->
 <rect x="36.1" y="178.6" width="42.9" height="29.1" rx="3.6" fill="#e31d1a"/>
 <rect x="49.9" y="178.6" width="7.4" height="5" fill="#ffe100"/>
 <rect x="57.3" y="178.6" width="7.4" height="5" fill="#f8c500"/>
 <path d="M46.1 182.1 h11.2 v25.6 h-11.2 q-4 0 -4 -4 v-17.6 q0 -4 4 -4z" fill="#ffe100"/>
 <path d="M57.3 182.1 h10.7 q4 0 4 4 v17.6 q0 4 -4 4 h-10.7z" fill="#f8c700"/>
 <circle cx="53.5" cy="193.5" r="1.5" fill="#111"/><circle cx="61.3" cy="193.5" r="1.5" fill="#111"/>
 <path d="M53.3 197.3 q4 2.2 8 0" stroke="#e0561a" stroke-width="1.1" fill="none" stroke-linecap="round"/>
 <!-- printer -->
 <rect x="93.2" y="178.6" width="43.3" height="28.6" rx="3.6" fill="#7fc8d1"/>
 <rect x="101.4" y="178.6" width="26" height="28.6" fill="#eef1f2"/>
 <rect x="104.5" y="184.3" width="19.9" height="16.4" fill="#9aa0a4"/>
 <rect x="106.8" y="184.6" width="15" height="8.6" fill="#7dc3cd"/>
 <path d="M106.8 193.5 h15 l-1.5 3 h-12z" fill="#c9d0d3"/>
 <path d="M112.8 184.6 h3 v3 l-1.5 2 l-1.5 -2z" fill="#1f2f33"/>
 <rect x="107" y="195.8" width="14.8" height="1.3" fill="#2a2d30"/>
 <circle cx="114.2" cy="197" r="1" fill="#2a2d30"/>
 <rect x="104.5" y="200.7" width="19.9" height="6" fill="#e4e8ea"/>
 <path d="M110 202.5 v2 M113 202.5 v2 M116 202.5 v2 M119 202.5 v2" stroke="#fff" stroke-width="1"/>
 <!-- gamepad -->
 <rect x="154.9" y="177.9" width="42.5" height="29.1" rx="3.6" fill="#5cb01d"/>
 <path d="M166 182.3 q4 0 6 1.6 q4 1.2 8 0 q2 -1.6 6 -1.6 q4.5 0 5.8 6 q1 6 0.3 11.5 q-0.5 3.5 -3 3.7 q-2 0 -4 -2.2 l-3 -3.5 q-1.5 -1.3 -3.5 -1.3 h-7 q-2 0 -3.5 1.3 l-3 3.5 q-2 2.2 -4 2.2 q-2.5 -0.2 -3 -3.7 q-0.7 -5.5 0.3 -11.5 q1.3 -6 5.8 -6z" fill="#fdfef9"/>
 <circle cx="176.2" cy="188.7" r="1.3" fill="#4a8a22"/>
 <!-- flask -->
 <rect x="210.5" y="176.6" width="42.9" height="29.1" rx="3.6" fill="#3b2889"/>
 <rect x="224.8" y="179.4" width="16" height="1.6" fill="#fff"/>
 <path d="M226.6 181 h11.4 v8 l12.6 13.6 h-35.3 l12.3 -13.6z" fill="#fff"/>
 <path d="M226.6 181 v8 l-10 11 q-1 1.6 0.6 1.6 h2.2 l9.8 -10.8 v-9.8z" fill="#3b2889" opacity="0"/>
 <path d="M229.3 181.5 v8.6 l-10.7 11.2 h1.5 l10.6 -11 z" fill="#3b2889"/>
 <path d="M229.5 181.2 h3.7 v15.6 l-3.7 2 l-8.5 2.5 l8.5 -11.2z" fill="#3b2889"/>
 <path d="M233.2 183.5 h2.5 M233.2 186.4 h2.5 M233.2 189.3 h2.5 M233.2 192.2 h2.5 M233.2 195.1 h2.5" stroke="#3b2889" stroke-width="1.1"/>
 <path d="M233.2 182 h4.8" stroke="#fff" stroke-width="0"/>
</svg>
</div>
<div class="a" style="left:10.5px;top:227.2px;width:64px;height:48.3px;background:#fff;border:0.5px solid #d8d8d8;overflow:hidden">
<svg width="64" height="48" style="position:absolute;left:0;top:0">
<rect x="13" y="3.8" width="38" height="1.5" fill="#5a5ad8"/>
<rect x="21.5" y="6.8" width="19.5" height="1.5" fill="#5a5ad8"/>
<path d="M6 12.5 h50" stroke="#e0e4d8" stroke-width="0.9"/>
<rect x="6" y="15.8" width="12" height="6.8" fill="#2a2a32"/><path d="M7.5 19.2 h9" stroke="#e8e8f0" stroke-width="1.2" opacity="0.75"/><rect x="6" y="21.4" width="12" height="1.2" fill="#111" opacity="0.5"/><rect x="19.6" y="15.8" width="12" height="6.8" fill="#8a3a8a"/><path d="M21.1 19.2 h9" stroke="#f0a0e0" stroke-width="1.2" opacity="0.75"/><rect x="19.6" y="21.4" width="12" height="1.2" fill="#111" opacity="0.5"/><rect x="32.6" y="15.8" width="12" height="6.8" fill="#5a2aa0"/><path d="M34.1 19.2 h9" stroke="#c0a0ff" stroke-width="1.2" opacity="0.75"/><rect x="32.6" y="21.4" width="12" height="1.2" fill="#111" opacity="0.5"/><rect x="45.6" y="15.8" width="12" height="6.8" fill="#4a2a7a"/><path d="M47.1 19.2 h9" stroke="#e0b0f0" stroke-width="1.2" opacity="0.75"/><rect x="45.6" y="21.4" width="12" height="1.2" fill="#111" opacity="0.5"/><rect x="6" y="24.5" width="12" height="6.8" fill="#1f5a65"/><path d="M7.5 27.9 h9" stroke="#70c0d0" stroke-width="1.2" opacity="0.75"/><rect x="6" y="30.1" width="12" height="1.2" fill="#111" opacity="0.5"/><rect x="19.6" y="24.5" width="12" height="6.8" fill="#5a3a48"/><path d="M21.1 27.9 h9" stroke="#d08080" stroke-width="1.2" opacity="0.75"/><rect x="19.6" y="30.1" width="12" height="1.2" fill="#111" opacity="0.5"/><rect x="32.6" y="24.5" width="12" height="6.8" fill="#221a1a"/><path d="M34.1 27.9 h9" stroke="#c08090" stroke-width="1.2" opacity="0.75"/><rect x="32.6" y="30.1" width="12" height="1.2" fill="#111" opacity="0.5"/><rect x="45.6" y="24.5" width="12" height="6.8" fill="#8a3a5a"/><path d="M47.1 27.9 h9" stroke="#f0a0c0" stroke-width="1.2" opacity="0.75"/><rect x="45.6" y="30.1" width="12" height="1.2" fill="#111" opacity="0.5"/><rect x="6" y="34" width="12" height="6.8" fill="#4a6a78"/><path d="M7.5 37.4 h9" stroke="#c0d0d8" stroke-width="1.2" opacity="0.75"/><rect x="6" y="39.6" width="12" height="1.2" fill="#111" opacity="0.5"/><rect x="19.6" y="34" width="12" height="6.8" fill="#c85a68"/><path d="M21.1 37.4 h9" stroke="#f8d0d0" stroke-width="1.2" opacity="0.75"/><rect x="19.6" y="39.6" width="12" height="1.2" fill="#111" opacity="0.5"/><rect x="32.6" y="34" width="12" height="6.8" fill="#6a4030"/><path d="M34.1 37.4 h9" stroke="#e0a070" stroke-width="1.2" opacity="0.75"/><rect x="32.6" y="39.6" width="12" height="1.2" fill="#111" opacity="0.5"/><rect x="45.6" y="34" width="12" height="6.8" fill="#5a5a5a"/><path d="M47.1 37.4 h9" stroke="#e0e0e0" stroke-width="1.2" opacity="0.75"/><rect x="45.6" y="39.6" width="12" height="1.2" fill="#111" opacity="0.5"/>
</svg></div>
<div class="a" style="left:10.5px;top:283px;width:64.5px;height:20px;background:#fff;border:0.5px solid #d8d8d8;overflow:hidden">
<svg width="64" height="20" style="position:absolute;left:0;top:0">
<rect x="13" y="3.5" width="26" height="1.3" fill="#5a62d0"/><rect x="40" y="3.5" width="11" height="1.3" fill="#5a62d0"/>
<path d="M3 10.5 h20" stroke="#aaa" stroke-width="0.7"/>
<rect x="39" y="8" width="24" height="6" fill="#2a4a80"/>
<rect x="48" y="10" width="10" height="3" fill="#c8602a" opacity="0.8"/>
</svg></div>
    <!-- main -->
    <div class="a" style="left:88px;top:54.5px;width:481px;height:229.5px;background:#e5e5e5"></div>
    <div class="a" style="left:563px;top:54.5px;width:6px;height:229.5px;background:#e7e7e7;border-left:0.5px solid #dadada"></div>
    <div class="a" style="left:563.5px;top:56.3px;width:5px;height:5.5px;background:#fdfdfd"></div>
    <div class="a" style="left:563.8px;top:177px;width:4.5px;height:6px;background:#fdfdfd"></div>
    <div class="a" style="left:563.5px;top:256.5px;width:5px;height:5.5px;background:#fdfdfd"></div>
    <div class="a" style="left:563.5px;top:264px;width:5px;height:5.5px;background:#fdfdfd"></div>
    <div class="a" style="left:563.5px;top:271.5px;width:5px;height:5.5px;background:#fdfdfd"></div>
    <svg class="a" style="left:563.5px;top:56.3px" width="5" height="25"><path d="M1.3 3.3 l1.2 -1.3 l1.2 1.3z" fill="#555"/></svg>
    <svg class="a" style="left:563.5px;top:256.5px" width="5" height="21"><path d="M1.3 3.3 l1.2 -1.3 l1.2 1.3z M1.3 9.8 h2.4 M1.3 11.2 h2.4 M1.3 17.3 h2.4 M1.3 18.7 h2.4" fill="#555" stroke="#555" stroke-width="0.4"/></svg>
    <svg class="a" style="left:82.5px;top:55px" width="6" height="6"><path d="M1.5 3.8 l1.3 -1.4 l1.3 1.4z" fill="#444"/></svg>
    <svg class="a" style="left:82.5px;top:291.5px" width="6" height="6"><path d="M1.3 2.2 l1.2 1.4 l1.2 -1.4z" fill="#444"/></svg>
<div class="a" style="left:179.7px;top:59px;width:293.7px;height:220px;background:#fff;overflow:hidden">
  <div class="t" style="left:0;width:293.7px;text-align:center;top:6.7px;font-family:'Liberation Serif',serif;font-weight:bold;font-size:9.8px;color:#27379c">3. ЦИФРОВІ ІННОВАЦІЇ ДЛЯ НАУКОВИХ</div>
  <div class="t" style="left:0;width:293.7px;text-align:center;top:19px;font-family:'Liberation Serif',serif;font-weight:bold;font-size:9.8px;color:#27379c">ДОСЛІДЖЕНЬ В КОНТЕКСТІ STEM-ОСВІТИ</div>
  <div class="t" style="left:0;width:293.7px;text-align:center;top:43.5px;font-family:'Liberation Serif',serif;font-weight:bold;font-size:9.8px;color:#1f2a78">ЗАСОБИ ТА ОБЛАДНАННЯ&nbsp; STEM</div>
<svg class="a" style="left:0;top:0" width="294" height="220">
 <defs>
  <linearGradient id="chipg" x1="0" y1="0" x2="1" y2="0.3"><stop offset="0" stop-color="#e4582a"/><stop offset="0.55" stop-color="#ef8a45"/><stop offset="1" stop-color="#f3a85a"/></linearGradient>
  <linearGradient id="windg" x1="0" y1="1" x2="1" y2="0"><stop offset="0" stop-color="#3a1f6e"/><stop offset="0.45" stop-color="#151a4c"/><stop offset="1" stop-color="#0f1a48"/></linearGradient>
  <linearGradient id="tubeg" x1="0" y1="0" x2="1" y2="0"><stop offset="0" stop-color="#8d9cc8"/><stop offset="0.5" stop-color="#d9e0f0"/><stop offset="1" stop-color="#7f8fbf"/></linearGradient>
 </defs>
 <!-- android -->
 <rect x="39.2" y="58" width="43.3" height="28.6" rx="4" fill="#a4c339"/>
 <path d="M52.2 65.8 a8.65 7 0 0 1 17.3 0z" fill="#fbfcef"/>
 <circle cx="57.3" cy="62.3" r="0.9" fill="#a4c339"/><circle cx="64.6" cy="62.3" r="0.9" fill="#a4c339"/>
 <rect x="52.2" y="67" width="17.3" height="14.8" rx="1" fill="#fbfcef"/>
 <rect x="47" y="67.1" width="3.9" height="11.3" rx="1.9" fill="#fbfcef"/>
 <rect x="70.8" y="67.1" width="3.9" height="11.3" rx="1.9" fill="#fbfcef"/>
 <rect x="56.3" y="80" width="4" height="7" rx="1.5" fill="#fbfcef"/>
 <rect x="62.3" y="80" width="4" height="7" rx="1.5" fill="#fbfcef"/>
 <!-- airplane -->
 <rect x="96.1" y="60.5" width="42.9" height="29.3" rx="3.6" fill="#1673bf"/>
 <path d="M117.3 62.8 c1 0 1.3 1 1.3 2 v7.8 l10.8 6.2 v2.2 l-10.8 -3.6 v5.6 l3 2.6 v1.6 l-4.3 -1 l-4.3 1 v-1.6 l3 -2.6 v-5.6 l-10.8 3.6 v-2.2 l10.8 -6.2 v-7.8 c0 -1 0.3 -2 1.3 -2z" fill="#fff"/>
 <!-- wind tunnel -->
 <rect x="151.2" y="60.9" width="41.6" height="28.6" rx="3.6" fill="url(#windg)"/>
 <path d="M152 71 q8 4 20 2" stroke="#6a3a8a" stroke-width="0.8" fill="none"/>
 <path d="M151.5 78 h18" stroke="#9aa2d0" stroke-width="0.8"/>
 <path d="M152 82 q10 0 22 5" stroke="#8a3070" stroke-width="0.7" fill="none"/>
 <path d="M156 77 q-3 -6 3 -9.5" stroke="#9aa2d0" stroke-width="0.7" fill="none"/>
 <path d="M156.5 63.5 q1 -3 4.5 -2.5 q3 1 5 4 l16 23 q0.5 1.3 -1.2 1.3 h-2 l-20 -20 q-3 -3 -2.3 -5.8z" fill="url(#tubeg)"/>
 <path d="M159 64 l21 24.5" stroke="#f4f6fc" stroke-width="0.7" opacity="0.8"/>
 <g fill="none" stroke="#8f9ac8" stroke-width="0.75">
  <path d="M174.61 64.65 L174.24 65.08 L173.80 65.40 L173.30 65.61 L172.78 65.69 L172.27 65.65 L171.79 65.49 L171.37 65.23 L171.03 64.88 L170.79 64.48 L170.66 64.04 L170.63 63.59 L170.71 63.16 L170.88 62.77 L171.13 62.44 L171.45 62.19 L171.80 62.03 L172.17 61.95 L172.54 61.96 L172.89 62.06 L173.19 62.24 L173.43 62.47 L173.61 62.74 L173.71 63.04 L173.74 63.34 L173.69 63.63 L173.58 63.89 L173.42 64.10 L173.22 64.27 L173.00 64.37 L172.77 64.42 L172.55 64.41 L172.34 64.35 L172.17 64.24 L172.03 64.11 L171.94 63.95 L171.89 63.79 L171.89 63.63 L171.92 63.48 L171.99 63.36 L172.08 63.27"/>
  <path d="M186.37 65.39 L186.00 66.04 L185.50 66.57 L184.89 66.95 L184.22 67.16 L183.54 67.20 L182.88 67.07 L182.29 66.78 L181.80 66.36 L181.44 65.85 L181.23 65.27 L181.17 64.68 L181.25 64.10 L181.48 63.58 L181.82 63.15 L182.24 62.82 L182.72 62.61 L183.22 62.54 L183.71 62.59 L184.16 62.76 L184.54 63.03 L184.82 63.37 L185.01 63.76 L185.09 64.17 L185.06 64.58 L184.93 64.94 L184.73 65.25 L184.46 65.49 L184.15 65.65 L183.83 65.72 L183.52 65.70 L183.23 65.61 L182.99 65.45 L182.81 65.25 L182.70 65.03 L182.65 64.79 L182.66 64.56 L182.73 64.36 L182.84 64.20 L182.99 64.09 L183.14 64.02"/>
  <path d="M187.33 77.18 L187.00 77.95 L186.49 78.61 L185.85 79.11 L185.12 79.42 L184.35 79.54 L183.59 79.46 L182.89 79.21 L182.29 78.79 L181.83 78.25 L181.53 77.63 L181.39 76.97 L181.42 76.31 L181.62 75.70 L181.95 75.16 L182.39 74.75 L182.91 74.46 L183.47 74.32 L184.03 74.32 L184.55 74.46 L185.00 74.72 L185.37 75.08 L185.62 75.50 L185.75 75.95 L185.77 76.41 L185.67 76.84 L185.47 77.21 L185.19 77.51 L184.87 77.72 L184.51 77.83 L184.15 77.85 L183.82 77.78 L183.54 77.63 L183.31 77.43 L183.15 77.18 L183.07 76.92 L183.06 76.67 L183.12 76.43 L183.23 76.24 L183.37 76.09 L183.54 76.00"/>
 </g>
 <!-- chip -->
 <rect x="208.9" y="60.5" width="42.5" height="29" rx="3.6" fill="url(#chipg)"/>
 <path d="M209 67 l22 4 M211 89 l20 -18 M231 71 l20 -9 M231 71 l10 18.5 M231 71 l-22 14" stroke="#f7c08a" stroke-width="2.2" opacity="0.35"/>
 <g transform="translate(231.8 70.5) rotate(-28)"><rect x="-8.8" y="-8" width="17.6" height="16" rx="1.8" fill="#2c2f33"/><path d="M-5 -1 h9 M-4 2.5 h6" stroke="#3e5560" stroke-width="0.8"/></g>
 <!-- lego -->
 <rect x="36.1" y="178.6" width="42.9" height="29.1" rx="3.6" fill="#e31d1a"/>
 <rect x="49.9" y="178.6" width="7.4" height="5" fill="#ffe100"/>
 <rect x="57.3" y="178.6" width="7.4" height="5" fill="#f8c500"/>
 <path d="M46.1 182.1 h11.2 v25.6 h-11.2 q-4 0 -4 -4 v-17.6 q0 -4 4 -4z" fill="#ffe100"/>
 <path d="M57.3 182.1 h10.7 q4 0 4 4 v17.6 q0 4 -4 4 h-10.7z" fill="#f8c700"/>
 <circle cx="53.5" cy="193.5" r="1.5" fill="#111"/><circle cx="61.3" cy="193.5" r="1.5" fill="#111"/>
 <path d="M53.3 197.3 q4 2.2 8 0" stroke="#e0561a" stroke-width="1.1" fill="none" stroke-linecap="round"/>
 <!-- printer -->
 <rect x="93.2" y="178.6" width="43.3" height="28.6" rx="3.6" fill="#7fc8d1"/>
 <rect x="101.4" y="178.6" width="26" height="28.6" fill="#eef1f2"/>
 <rect x="104.5" y="184.3" width="19.9" height="16.4" fill="#9aa0a4"/>
 <rect x="106.8" y="184.6" width="15" height="8.6" fill="#7dc3cd"/>
 <path d="M106.8 193.5 h15 l-1.5 3 h-12z" fill="#c9d0d3"/>
 <path d="M112.8 184.6 h3 v3 l-1.5 2 l-1.5 -2z" fill="#1f2f33"/>
 <rect x="107" y="195.8" width="14.8" height="1.3" fill="#2a2d30"/>
 <circle cx="114.2" cy="197" r="1" fill="#2a2d30"/>
 <rect x="104.5" y="200.7" width="19.9" height="6" fill="#e4e8ea"/>
 <path d="M110 202.5 v2 M113 202.5 v2 M116 202.5 v2 M119 202.5 v2" stroke="#fff" stroke-width="1"/>
 <!-- gamepad -->
 <rect x="154.9" y="177.9" width="42.5" height="29.1" rx="3.6" fill="#5cb01d"/>
 <path d="M166 182.3 q4 0 6 1.6 q4 1.2 8 0 q2 -1.6 6 -1.6 q4.5 0 5.8 6 q1 6 0.3 11.5 q-0.5 3.5 -3 3.7 q-2 0 -4 -2.2 l-3 -3.5 q-1.5 -1.3 -3.5 -1.3 h-7 q-2 0 -3.5 1.3 l-3 3.5 q-2 2.2 -4 2.2 q-2.5 -0.2 -3 -3.7 q-0.7 -5.5 0.3 -11.5 q1.3 -6 5.8 -6z" fill="#fdfef9"/>
 <circle cx="176.2" cy="188.7" r="1.3" fill="#4a8a22"/>
 <!-- flask -->
 <rect x="210.5" y="176.6" width="42.9" height="29.1" rx="3.6" fill="#3b2889"/>
 <rect x="224.8" y="179.4" width="16" height="1.6" fill="#fff"/>
 <path d="M226.6 181 h11.4 v8 l12.6 13.6 h-35.3 l12.3 -13.6z" fill="#fff"/>
 <path d="M226.6 181 v8 l-10 11 q-1 1.6 0.6 1.6 h2.2 l9.8 -10.8 v-9.8z" fill="#3b2889" opacity="0"/>
 <path d="M229.3 181.5 v8.6 l-10.7 11.2 h1.5 l10.6 -11 z" fill="#3b2889"/>
 <path d="M229.5 181.2 h3.7 v15.6 l-3.7 2 l-8.5 2.5 l8.5 -11.2z" fill="#3b2889"/>
 <path d="M233.2 183.5 h2.5 M233.2 186.4 h2.5 M233.2 189.3 h2.5 M233.2 192.2 h2.5 M233.2 195.1 h2.5" stroke="#3b2889" stroke-width="1.1"/>
 <path d="M233.2 182 h4.8" stroke="#fff" stroke-width="0"/>
</svg>
<div class="t li" style="font-size:13px;margin-top:-2.2px;left:31.6px;top:99.8px">•</div>
<div class="t li" style="left:42.9px;top:99.8px">1) Робототехніка</div>
<div class="t li" style="left:142.8px;top:99.8px">2) <span class="sp">Авіамоделювання</span></div>
<div class="t li" style="font-size:13px;margin-top:-2.2px;left:31.6px;top:114.8px">•</div>
<div class="t li" style="left:42.9px;top:114.8px">3) Аеродинаміка</div>
<div class="t li" style="left:141.8px;top:114.8px">4) Мікроелектроніка</div>
<div class="t li" style="font-size:13px;margin-top:-2.2px;left:31.6px;top:129.8px">•</div>
<div class="t li" style="left:42.9px;top:129.8px">5) LEGO</div>
<div class="t li" style="left:144.3px;top:129.8px">6) 3D <span class="sp">принтери</span></div>
<div class="t li" style="font-size:13px;margin-top:-2.2px;left:31.6px;top:144.8px">•</div>
<div class="t li" style="left:42.9px;top:144.8px">7) <span class="sp">Відеоігри</span></div>
<div class="t li" style="left:143.3px;top:144.8px;word-spacing:1.5px">8) <span class="sp">Лабораторне обладнання</span></div>
</div>
    <div class="a" style="left:88px;top:284px;width:481px;height:0.8px;background:#d4d4d4"></div>
    <div class="a" style="left:88px;top:284.8px;width:481px;height:12.2px;background:#e8e8e8"></div>
    <div class="t" style="left:94px;top:288.5px;font-size:5.3px;color:#6a6a6a">Заметки к слайду</div>
    <!-- status bar -->
    <div class="a" style="left:0;top:297px;width:569px;height:10px;background:#f1f1f1"></div>
<div class="t" style="left:2px;top:299.8px;font-size:3.8px;color:#555">Слайд 42 из 44</div>
<svg class="a" style="left:34px;top:298.8px" width="7" height="6"><rect x="0.5" y="0.5" width="5" height="4.5" fill="none" stroke="#999" stroke-width="0.5"/><path d="M1.8 2.8 l1 1 l1.8 -2" fill="none" stroke="#888" stroke-width="0.5"/></svg>
<div class="t" style="left:45px;top:299.8px;font-size:3.8px;color:#555">английский (США)</div>
<svg class="a" style="left:388px;top:297.5px" width="181" height="9">
 <rect x="63.2" y="0" width="11.3" height="9" fill="#d6d6d6"/>
 <g fill="none" stroke="#777" stroke-width="0.6">
  <path d="M4 6 l1.5 -3 l1.5 3z"/>
  <path d="M30 2.5 h4 v3 h-2 l-1 1 v-1 h-1z" fill="#666"/>
  <rect x="66" y="2.3" width="5.5" height="4.2" stroke="#666"/><path d="M68.2 2.3 v4.2"/>
  <rect x="78" y="2.3" width="5.5" height="4.2"/><path d="M80.75 2.3 v4.2 M78 4.4 h5.5"/>
  <path d="M89.5 2.5 h5 M89.5 4.4 h5 M89.5 6.3 h5 M92 2.5 v4"/>
  <path d="M101 2.3 h6 M104 2.3 v2.5 l-1.5 1.5 M104 4.8 l1.5 1.5"/>
  <path d="M111.5 4.4 h3"/>
  <path d="M116 4.4 h39" stroke="#aaa"/>
  <path d="M155 4.4 h3 M156.5 2.9 v3"/>
  <rect x="173.5" y="2" width="5" height="5" stroke="#999"/>
 </g>
 <rect x="131" y="2" width="1.2" height="5" fill="#444"/>
</svg>
<div class="t" style="left:395.5px;top:299.5px;font-size:3.9px;color:#555">Заметки</div>
<div class="t" style="left:422px;top:299.5px;font-size:4px;color:#555">Примечания</div>
<div class="t" style="left:551px;top:299.5px;font-size:4.3px;color:#555">50%</div>
</div>
  </div>
</div>

<svg class="a" style="left:54.5px;top:268px" width="8" height="11"><path d="M1 1 v7.5 l1.8 -1.6 l1.3 2.8 l1.2 -0.6 l-1.3 -2.7 h2.5z" fill="#fff" stroke="#222" stroke-width="0.6"/></svg>
<!-- ============ MEET BOTTOM ============ -->
<style>
.tile{position:absolute;top:381.5px;height:50px;width:61.5px;border-radius:4px;overflow:hidden;background:#3c4043}
.nm{position:absolute;left:7px;top:38px;font-size:6px;color:#fff;-webkit-text-stroke:0.15px #fff;white-space:nowrap;line-height:1;text-shadow:0 0 1px rgba(0,0,0,.5)}
.mute{position:absolute;width:9px;height:9px}
.cbtn{position:absolute;top:440.5px;width:17px;height:17px;border-radius:50%;background:#36373b}
</style>
<!-- tile 1 Olga -->
<div class="tile" style="left:6px;width:62px;background:linear-gradient(90deg,#bdb9b1,#b5b1a9 50%,#aca79f);border:1.5px solid #8ab4f8">
  <div class="a" style="left:8px;top:36px;width:48px;height:20px;border-radius:18px 18px 0 0;background:#201e22"></div>
  <div class="a" style="left:27px;top:34px;width:10px;height:6px;background:#d8b0a0;clip-path:polygon(0 0,100% 0,50% 100%)"></div>
  <div class="a" style="left:20px;top:3px;width:24px;height:24px;border-radius:12px 12px 6px 6px;background:#604236"></div>
  <div class="a" style="left:21.5px;top:7px;width:21px;height:28px;border-radius:9px 9px 11px 11px;background:radial-gradient(ellipse at 50% 50%,#ebd0c4 0,#e2bfb0 45%,#d3a494 85%)"></div>
  <div class="a" style="left:22.5px;top:17.5px;width:8.5px;height:5.5px;border:0.8px solid #a8686a;border-radius:2px"></div>
  <div class="a" style="left:32.5px;top:17.5px;width:8.5px;height:5.5px;border:0.8px solid #a8686a;border-radius:2px"></div>
  <div class="a" style="left:29px;top:28px;width:6px;height:1.8px;border-radius:1px;background:#b07068"></div>
  <div class="a" style="left:43.7px;top:3.5px;width:11px;height:11px;border-radius:50%;background:#1a73e8"></div>
  <svg class="a" style="left:43.7px;top:3.5px" width="11" height="11"><path d="M3.2 4.5 v2 M5.5 3.5 v4 M7.8 4.5 v2" stroke="#fff" stroke-width="1.2" stroke-linecap="round"/></svg>
  <div class="nm" style="top:36.5px;left:5.8px">Ольга Кузьменк...</div>
</div>
<!-- tile 2 Roman -->
<div class="tile" style="left:72.5px;width:61px">
  <div class="a" style="left:21.5px;top:16px;width:18px;height:18px;border-radius:50%;overflow:hidden;background:radial-gradient(circle at 70% 40%,#e4e8ec 0,#cfd6de 50%,#b8c0ca 100%)">
    <div class="a" style="left:4.5px;top:3px;width:9px;height:11px;border-radius:4.5px 4.5px 4px 4px;background:#a87a68"></div>
    <div class="a" style="left:4.5px;top:2.5px;width:9px;height:3.5px;border-radius:4px 4px 0 0;background:#2a2220"></div>
    <div class="a" style="left:5px;top:7px;width:8px;height:1.2px;background:#3a2a28"></div>
    <div class="a" style="left:2px;top:13px;width:14px;height:8px;border-radius:6px 6px 0 0;background:#1e1c1c"></div>
  </div>
  <div class="nm">Роман Кушка</div>
</div>
<!-- tile 3 Svitlana -->
<div class="tile" style="left:138px;width:61.3px">
  <div class="a" style="left:21px;top:16px;width:19px;height:19px;border-radius:50%;overflow:hidden;background:#6a2a30">
    <div class="a" style="left:7px;top:5px;width:14px;height:16px;border-radius:50%;background:radial-gradient(circle at 50% 50%,#f4c8d0 0,#e8a8b8 50%,#c07888 100%)"></div>
    <div class="a" style="left:8px;top:0;width:9px;height:5px;border-radius:50%;background:#e8eed8"></div>
    <div class="a" style="left:0;top:4px;width:6px;height:12px;background:#3a1a1a;border-radius:3px"></div>
  </div>
  <div class="nm">Світлана Єфім...</div>
</div>
<!-- tile 4 Lyudmyla -->
<div class="tile" style="left:204px;width:60.7px">
  <div class="a" style="left:14.7px;top:0;width:31.3px;height:50px;background:linear-gradient(180deg,#bcd8ae,#b0d0a0 60%,#a5c794)"></div>
  <div class="a" style="left:16.5px;top:16px;width:28px;height:30px;border-radius:14px 14px 8px 8px;background:#4e3a2e"></div>
  <div class="a" style="left:18.5px;top:19.5px;width:24px;height:31px;border-radius:10px 10px 10px 10px;background:radial-gradient(ellipse at 50% 45%,#d2b0a0 0,#c29c8a 55%,#a88070 100%)"></div>
  <div class="a" style="left:23px;top:29px;width:5px;height:1.5px;background:#6a5040"></div>
  <div class="a" style="left:33px;top:29px;width:5px;height:1.5px;background:#6a5040"></div>
  <div class="a" style="left:4.7px;top:36.5px;width:51.3px;height:10.7px;border-radius:6px;background:#fff"></div>
  <svg class="a" style="left:8.5px;top:38.5px" width="7" height="7"><path d="M2 6 v-3 q0 -1 1 -1 q1 0 1 1 v-1 q0 -1 1 -1 q1 0 1 1 v4 q0 1 -1 1 h-2z" fill="#202124"/></svg>
  <div class="t" style="left:18px;top:39.5px;font-size:5.3px;color:#202124">Людмила К...</div>
</div>
<!-- tile 5 Mykola -->
<div class="tile" style="left:269.7px;width:60.6px;background:#c6c8c7">
  <div class="a" style="left:0;top:0;width:13px;height:50px;background:linear-gradient(90deg,#d2d3d1,#c4c6c5)"></div>
  <div class="a" style="left:13px;top:0;width:13px;height:50px;background:linear-gradient(90deg,#aeb3b4,#8f9598)"></div>
  <div class="a" style="left:26px;top:3px;width:22px;height:47px;background:linear-gradient(180deg,#eef2f3 0,#e9eef0 35%,#b8c0c4 55%,#8d979c 75%,#7a8488 100%)"></div>
  <div class="a" style="left:26px;top:0;width:22px;height:3px;background:#dfe3e4"></div>
  <div class="a" style="left:27px;top:22px;width:20px;height:10px;background:linear-gradient(180deg,rgba(120,130,135,0),#7f8a90);opacity:.8"></div>
  <div class="a" style="left:48px;top:0;width:4px;height:50px;background:#a6acae"></div>
  <div class="a" style="left:52px;top:0;width:9px;height:50px;background:linear-gradient(180deg,#dde0e1,#c8cccd)"></div>
  <div class="a" style="left:-4px;top:17px;width:20px;height:34px;border-radius:10px 10px 0 0;background:linear-gradient(180deg,#d4d0cc 0,#b8aca6 25%,#8a6e66 45%,#6a5048 65%,#2a2222 85%)"></div>
  <div class="a" style="left:0;top:39px;width:61px;height:11px;background:linear-gradient(90deg,#3a3838,#2a2c34 25%,#6a6a78 45%,#3c5068 60%,#8a9090 75%,#3a4a3a)"></div>
  <div class="a" style="left:46px;top:33px;width:11px;height:14px;border-radius:50%;background:#44503e;opacity:.85"></div>
  <div class="nm">Микола Садо...</div>
</div>
<!-- tile 6 Olena -->
<div class="tile" style="left:335.3px;width:60.7px;background:radial-gradient(ellipse at 25% 35%,#cdc6c0 0,#bcb3ac 45%,#a0958e 80%)">
  <div class="a" style="left:42px;top:18px;width:12px;height:14px;border-radius:50%;background:#5a4e48;opacity:.45"></div>
  <div class="a" style="left:6px;top:5px;width:20px;height:12px;border-radius:50%;background:#d8d2cc;opacity:.6"></div>
  <div class="a" style="left:20.5px;top:16px;width:22px;height:35px;border-radius:11px 11px 3px 3px;background:#4a3428"></div>
  <div class="a" style="left:25.5px;top:19.5px;width:12px;height:17px;border-radius:6px 6px 7px 7px;background:radial-gradient(ellipse at 50% 45%,#dcbcac 0,#c9a594 60%,#a07e6e 100%)"></div>
  <div class="a" style="left:28px;top:34px;width:7px;height:5px;background:#b89484"></div>
  <div class="nm">Олена Яценко</div>
</div>
<!-- tile 4b -->
<!-- tile 7 -->
<div class="tile" style="left:400.7px;width:61px">
  <div class="a" style="left:9px;top:0;width:44px;height:21.5px;overflow:hidden;background:linear-gradient(180deg,#6fae9e,#62a090 70%,#8cb0a6)">
    <div class="a" style="left:-14px;top:4px;width:40px;height:34px;border-radius:50%;border:3px solid #e8ece8;border-top-color:transparent;border-right-color:transparent;transform:rotate(10deg)"></div>
    <div class="a" style="left:0;top:0;width:6px;height:22px;background:linear-gradient(90deg,#e4e6e2,rgba(228,230,226,0.3))"></div>
    <div class="a" style="left:0;top:16px;width:44px;height:6px;background:linear-gradient(90deg,#e8eae8,#c4c8c8 50%,#a8b0b0)"></div>
  </div>
</div>
<!-- tile 8 -->
<div class="tile" style="left:467.3px;width:60.3px">
  <div class="a" style="left:19.5px;top:13.5px;width:10px;height:10px;border-radius:50%;background:#127a55"></div>
  <div class="t" style="left:22.3px;top:16px;font-size:5.5px;color:#fff;font-weight:bold">Н</div>
  <div class="a" style="left:30px;top:13px;width:11px;height:11px;border-radius:50%;background:#4a4e52;border:1px solid #6d7175"></div>
  <div class="t" style="left:33.2px;top:16px;font-size:5.5px;color:#dde;font-weight:bold">О</div>
</div>
<!-- tile 9 -->
<div class="tile" style="left:532.7px;width:60.3px">
  <div class="a" style="left:0;top:6.5px;width:24px;height:15px;background:#f2f2f0"></div>
  <div class="a" style="left:24px;top:3.5px;width:36px;height:18px;background:repeating-linear-gradient(90deg,#a86530 0,#c08040 3px,#9a5a28 5px,#b87438 8px)"></div>
  <div class="a" style="left:24px;top:10px;width:36px;height:1.2px;background:#7a4a20;opacity:.6"></div>
  <div class="a" style="left:8px;top:19px;width:16px;height:3px;background:#2a2a2a;opacity:.7"></div>
</div>
<!-- mute icons -->
<svg class="a" style="left:0;top:0" width="600" height="466"><circle cx="122.6" cy="391" r="5" fill="#202124" opacity="0.35"/><rect x="121.69999999999999" y="388" width="1.8" height="3.6" rx="0.9" fill="#fff"/><path d="M120.6 390.7 a2 2 0 0 0 4 0 M122.6 392.7 v1.2" fill="none" stroke="#fff" stroke-width="0.6"/><path d="M120.0 387.8 l5 6" stroke="#fff" stroke-width="0.7"/><path d="M120.39999999999999 387.4 l5 6" stroke="#3c4043" stroke-width="0.4"/><circle cx="188" cy="391" r="5" fill="#202124" opacity="0.35"/><rect x="187.1" y="388" width="1.8" height="3.6" rx="0.9" fill="#fff"/><path d="M186 390.7 a2 2 0 0 0 4 0 M188 392.7 v1.2" fill="none" stroke="#fff" stroke-width="0.6"/><path d="M185.4 387.8 l5 6" stroke="#fff" stroke-width="0.7"/><path d="M185.8 387.4 l5 6" stroke="#3c4043" stroke-width="0.4"/><circle cx="254.5" cy="391" r="5" fill="#202124" opacity="0.35"/><rect x="253.6" y="388" width="1.8" height="3.6" rx="0.9" fill="#fff"/><path d="M252.5 390.7 a2 2 0 0 0 4 0 M254.5 392.7 v1.2" fill="none" stroke="#fff" stroke-width="0.6"/><path d="M251.9 387.8 l5 6" stroke="#fff" stroke-width="0.7"/><path d="M252.3 387.4 l5 6" stroke="#3c4043" stroke-width="0.4"/><circle cx="320" cy="391" r="5" fill="#202124" opacity="0.35"/><rect x="319.1" y="388" width="1.8" height="3.6" rx="0.9" fill="#fff"/><path d="M318 390.7 a2 2 0 0 0 4 0 M320 392.7 v1.2" fill="none" stroke="#fff" stroke-width="0.6"/><path d="M317.4 387.8 l5 6" stroke="#fff" stroke-width="0.7"/><path d="M317.8 387.4 l5 6" stroke="#3c4043" stroke-width="0.4"/><circle cx="385.5" cy="391" r="5" fill="#202124" opacity="0.35"/><rect x="384.6" y="388" width="1.8" height="3.6" rx="0.9" fill="#fff"/><path d="M383.5 390.7 a2 2 0 0 0 4 0 M385.5 392.7 v1.2" fill="none" stroke="#fff" stroke-width="0.6"/><path d="M382.9 387.8 l5 6" stroke="#fff" stroke-width="0.7"/><path d="M383.3 387.4 l5 6" stroke="#3c4043" stroke-width="0.4"/><circle cx="452" cy="391" r="5" fill="#202124" opacity="0.35"/><rect x="451.1" y="388" width="1.8" height="3.6" rx="0.9" fill="#fff"/><path d="M450 390.7 a2 2 0 0 0 4 0 M452 392.7 v1.2" fill="none" stroke="#fff" stroke-width="0.6"/><path d="M449.4 387.8 l5 6" stroke="#fff" stroke-width="0.7"/><path d="M449.8 387.4 l5 6" stroke="#3c4043" stroke-width="0.4"/><circle cx="582" cy="391" r="5" fill="#202124" opacity="0.35"/><rect x="581.1" y="388" width="1.8" height="3.6" rx="0.9" fill="#fff"/><path d="M580 390.7 a2 2 0 0 0 4 0 M582 392.7 v1.2" fill="none" stroke="#fff" stroke-width="0.6"/><path d="M579.4 387.8 l5 6" stroke="#fff" stroke-width="0.7"/><path d="M579.8 387.4 l5 6" stroke="#3c4043" stroke-width="0.4"/></svg>
<!-- notification popup -->
<div class="a" style="left:400.5px;top:403px;width:192.5px;height:28px;background:#3c4043;border-radius:4px"></div>
<svg class="a" style="left:406px;top:412px" width="10" height="10"><path d="M3 9 q-1.5 -1 -1.5 -3 v-2.5 q0 -0.8 0.8 -0.8 q0.7 0 0.7 0.8 v-2 q0 -0.8 0.8 -0.8 q0.7 0 0.7 0.8 q0 -0.8 0.8 -0.8 q0.7 0 0.7 0.8 v0.5 q0 -0.8 0.8 -0.8 q0.7 0 0.7 0.8 v4.5 q0 2 -2 3z" fill="none" stroke="#e8eaed" stroke-width="0.8"/></svg>
<div class="t" style="left:419.7px;top:410.3px;font-size:6.4px;color:#e8eaed">Людмила Колісник піднімає</div>
<div class="t" style="left:419.7px;top:418.3px;font-size:6.4px;color:#e8eaed">руку</div>
<div class="t" style="left:521px;top:414px;font-size:6.6px;color:#8ab4f8">Відкрити чергу</div>
<svg class="a" style="left:576px;top:413px" width="8" height="8"><path d="M1 1 l6 6 M7 1 l-6 6" stroke="#e8eaed" stroke-width="1.1"/></svg>

<!-- control bar -->
<div class="t" style="left:9.7px;top:445px;font-size:7.6px;color:#f1f3f4;-webkit-text-stroke:0.25px #f1f3f4">14:53&nbsp; |&nbsp; myr-tfzs-kqf</div>
<div class="a" style="left:7px;top:462px;width:12px;height:12px;border-radius:50%;background:#c8d4e0"></div>
<div class="a" style="left:201px;top:440.5px;width:27.3px;height:17.2px;border-radius:9px;background:#35363a"></div>
<div class="a" style="left:210.7px;top:440.5px;width:17.6px;height:17.2px;border-radius:50%;background:#ea4335"></div>
<div class="a" style="left:235px;top:440.5px;width:26px;height:17.2px;border-radius:9px;background:#35363a"></div>
<div class="a" style="left:244px;top:440.5px;width:17px;height:17.2px;border-radius:50%;background:#3c4043"></div>
<div class="cbtn" style="left:267px"></div>
<div class="cbtn" style="left:288px"></div>
<div class="cbtn" style="left:310.5px"></div>
<div class="cbtn" style="left:330.5px"></div>
<div class="cbtn" style="left:353px"></div>
<div class="a" style="left:376px;top:440.8px;width:23px;height:16.5px;border-radius:8.3px;background:#ea4335"></div>
<svg class="a" style="left:0;top:430px" width="600" height="36">
 <g fill="none" stroke="#e8eaed" stroke-width="0.9">
  <path d="M205 19.5 l2 -2 l2 2"/>
  <path d="M238.5 19.5 l2 -2 l2 2"/>
  <path d="M217.5 16 v3 a1.8 1.8 0 0 0 3.6 0 v-3 a1.8 1.8 0 0 0 -3.6 0z M216.2 18.8 a3.1 3.1 0 0 0 6.2 0 M216.5 15 l6 8" stroke="#fff"/>
  <rect x="248.5" y="16.3" width="6" height="5.5" rx="1"/><path d="M254.5 18 l2 -1.2 v4.5 l-2 -1.2"/>
  <rect x="270.9" y="15.6" width="8.4" height="6.2" rx="0.8" stroke-width="1"/><path d="M274.4 17.6 h-1.5 v2.2 h1.5 M277.7 17.6 h-1.5 v2.2 h1.5" stroke-width="0.8"/>
  <circle cx="297.3" cy="18.7" r="3.9" stroke-width="1"/><path d="M295.8 20.6 h3" stroke-width="0.8"/><circle cx="296" cy="17.6" r="0.55" fill="#e8eaed" stroke="none"/><circle cx="298.6" cy="17.6" r="0.55" fill="#e8eaed" stroke="none"/>
  <rect x="314.2" y="15.5" width="9.3" height="6.6" rx="0.6" stroke-width="1"/><path d="M317 19.6 l1.85 -1.9 l1.85 1.9z" fill="#e8eaed" stroke="none"/><rect x="318.3" y="19.3" width="1.1" height="1.3" fill="#e8eaed" stroke="none"/>
  <path d="M337 24 q-2.2 -1 -2.2 -3.8 v-2.7 q0 -0.8 0.8 -0.8 q0.7 0 0.7 0.8 v-2.4 q0 -0.8 0.8 -0.8 q0.7 0 0.7 0.8 q0 -0.9 0.8 -0.9 q0.8 0 0.8 0.9 v0.5 q0 -0.8 0.8 -0.8 q0.7 0 0.7 0.8 v5.2 q0 2.7 -2.7 3.2z" fill="#e8eaed" stroke="none"/>
  <circle cx="503.8" cy="18.4" r="4.2" stroke-width="1.1"/><path d="M503.8 17.6 v3.2 M503.8 15.8 v0.7" stroke-width="1.1"/>
  <g fill="#e8eaed" stroke="none"><circle cx="521.8" cy="16" r="1.9"/><path d="M518.3 22 v-1.2 q0 -2 3.5 -2 q3.5 0 3.5 2 v1.2z"/><circle cx="526.3" cy="16.2" r="1.5"/><path d="M526 18.8 q3 0 3 2 v1.2 h-2.5 v-1.2 q0 -1.2 -0.5 -2z"/></g>
  <path d="M540.3 14.8 h8.8 v6.8 h-6.2 l-2.6 2.2z" stroke-width="1"/><path d="M542.3 18.8 l1.5 -1.3 l1.5 1.3 l1.7 -1.4" stroke-width="0.7"/>
  <path d="M565.2 14.3 l2 3.3 h-4z" fill="#e8eaed"/><rect x="561.5" y="18.7" width="3.2" height="3.2" rx="0.4" stroke-width="1"/><circle cx="567.8" cy="20.3" r="1.6" stroke-width="1"/>
  <rect x="581.5" y="17.5" width="6.5" height="5.5" rx="0.8"/><path d="M583 17.5 v-1.5 a1.75 1.75 0 0 1 3.5 0 v1.5"/><circle cx="587.5" cy="22" r="1.8" fill="#202124"/>
 </g>
 <path d="M382.6 19.3 q5.2 -3 10.4 0 l-0.6 1.6 l-2 -0.5 v-1 q-2.6 -0.9 -5.2 0 v1 l-2 0.5z" fill="#fff"/>
 <g fill="#fff"><circle cx="361.7" cy="15.8" r="1"/><circle cx="361.7" cy="19" r="1"/><circle cx="361.7" cy="22.2" r="1"/></g>
 <rect x="525" y="5.5" width="12" height="6.5" rx="3.2" fill="#5f6368"/>
</svg>
<div class="t" style="left:527.8px;top:436.8px;font-size:5px;color:#fff">42</div>
</body></html>
